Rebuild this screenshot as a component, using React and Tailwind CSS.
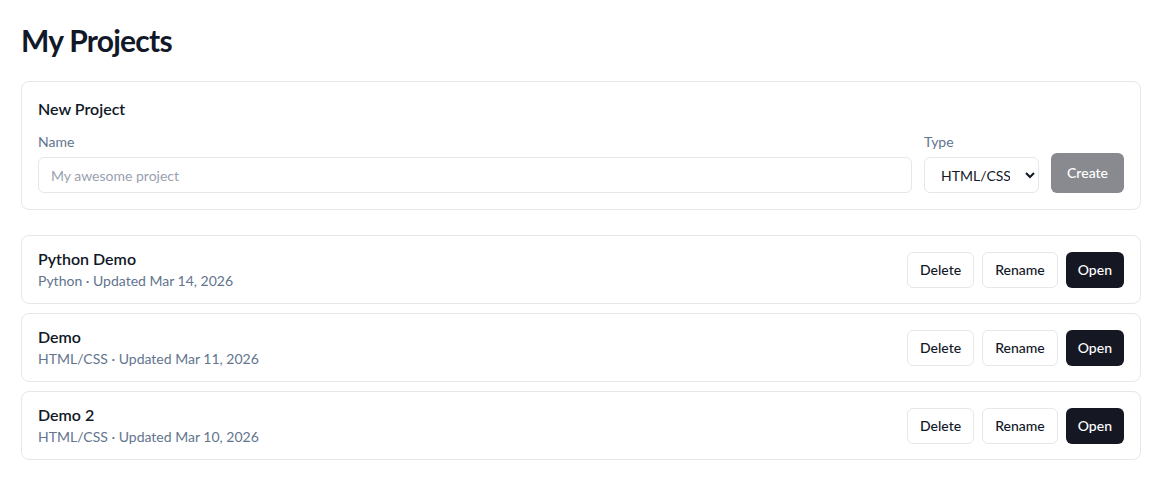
const projects = [
  { name: 'Python Demo', type: 'Python', updated: 'Mar 14, 2026' },
  { name: 'Demo', type: 'HTML/CSS', updated: 'Mar 11, 2026' },
  { name: 'Demo 2', type: 'HTML/CSS', updated: 'Mar 10, 2026' },
]

function RowButton({ children, dark }) {
  return (
    <button
      type="button"
      className={
        dark
          ? 'h-9 px-3 rounded-md bg-[#151823] text-white text-sm font-medium'
          : 'h-9 px-3 rounded-md border border-gray-200 bg-white text-[#111827] text-sm font-medium'
      }
    >
      {children}
    </button>
  )
}

export default function App() {
  return (
    <div
      className="min-h-[481px] bg-white pl-[21px] pr-[15px] pt-[22px] text-[#111827]"
      style={{ fontFamily: 'Lato, "Noto Sans", sans-serif' }}
    >
      <h1 className="text-[30px] leading-9 font-bold tracking-tight">My Projects</h1>

      <div className="mt-[23px] rounded-lg border border-gray-200 px-4 pt-[15px] pb-4">
        <h2 className="text-base font-semibold leading-6">New Project</h2>
        <div className="mt-[11px] flex items-end gap-3">
          <div className="flex-1 min-w-0">
            <label className="block text-sm text-slate-500 leading-5">Name</label>
            <input
              type="text"
              placeholder="My awesome project"
              className="mt-[5px] block h-9 w-full rounded-md border border-gray-200 px-3 text-sm placeholder:text-gray-400 outline-none"
            />
          </div>
          <div className="w-[115px]">
            <label className="block text-sm text-slate-500 leading-5">Type</label>
            <select
              defaultValue="html"
              className="mt-[5px] block h-9 w-full rounded-md border border-gray-200 bg-white px-3 text-sm outline-none"
            >
              <option value="html">HTML/CSS</option>
              <option value="python">Python</option>
            </select>
          </div>
          <button
            type="button"
            disabled
            className="h-10 px-4 rounded-md bg-[#151823] text-white text-sm font-medium opacity-50"
          >
            Create
          </button>
        </div>
      </div>

      <ul className="mt-[25px] flex flex-col gap-[9px]">
        {projects.map((p) => (
          <li
            key={p.name}
            className="flex items-center justify-between rounded-lg border border-gray-200 px-4 h-[69px]"
          >
            <div className="min-w-0">
              <p className="text-base font-semibold leading-6 -mt-px">{p.name}</p>
              <p className="text-sm text-slate-500 leading-5">
                {p.type} · Updated {p.updated}
              </p>
            </div>
            <div className="flex items-center gap-2">
              <RowButton>Delete</RowButton>
              <RowButton>Rename</RowButton>
              <RowButton dark>Open</RowButton>
            </div>
          </li>
        ))}
      </ul>
    </div>
  )
}
